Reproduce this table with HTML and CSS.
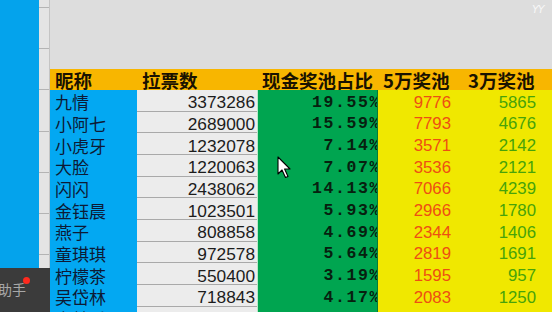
FILE: index.html
```html
<!DOCTYPE html>
<html lang="zh">
<head>
<meta charset="utf-8">
<link rel="stylesheet" href="styles.css">
</head>
<body>
<div class="screen">
  <div class="strip"></div>
  <div class="rowhdr"></div>
  <div class="main">
    <div class="topgap"></div>
    <div class="sheet">
      <div class="h">昵称</div>
      <div class="h">拉票数</div>
      <div class="h">现金奖池占比</div>
      <div class="h">5万奖池</div>
      <div class="h h3">3万奖池</div>

      <div class="c name">九情</div><div class="c votes">3373286</div><div class="c pct"><span>19.55%</span></div><div class="c w5">9776</div><div class="c w3">5865</div>
      <div class="c name">小阿七</div><div class="c votes">2689000</div><div class="c pct"><span>15.59%</span></div><div class="c w5">7793</div><div class="c w3">4676</div>
      <div class="c name">小虎牙</div><div class="c votes">1232078</div><div class="c pct"><span>7.14%</span></div><div class="c w5">3571</div><div class="c w3">2142</div>
      <div class="c name">大脸</div><div class="c votes">1220063</div><div class="c pct"><span>7.07%</span></div><div class="c w5">3536</div><div class="c w3">2121</div>
      <div class="c name">闪闪</div><div class="c votes">2438062</div><div class="c pct"><span>14.13%</span></div><div class="c w5">7066</div><div class="c w3">4239</div>
      <div class="c name">金钰晨</div><div class="c votes">1023501</div><div class="c pct"><span>5.93%</span></div><div class="c w5">2966</div><div class="c w3">1780</div>
      <div class="c name">燕子</div><div class="c votes">808858</div><div class="c pct"><span>4.69%</span></div><div class="c w5">2344</div><div class="c w3">1406</div>
      <div class="c name">童琪琪</div><div class="c votes">972578</div><div class="c pct"><span>5.64%</span></div><div class="c w5">2819</div><div class="c w3">1691</div>
      <div class="c name">柠檬茶</div><div class="c votes">550400</div><div class="c pct"><span>3.19%</span></div><div class="c w5">1595</div><div class="c w3">957</div>
      <div class="c name">吴岱林</div><div class="c votes">718843</div><div class="c pct"><span>4.17%</span></div><div class="c w5">2083</div><div class="c w3">1250</div>
      <div class="c name">李林乐</div><div class="c votes">705512</div><div class="c pct"><span>4.09%</span></div><div class="c w5">2045</div><div class="c w3">1227</div>
    </div>
  </div>

  <div class="helper"><span class="helper-text">助手</span><span class="dot"></span></div>
  <div class="yy">YY</div>
  <svg class="cursor" width="15" height="23" viewBox="0 0 15 23">
    <path d="M1 1 L1 18 L5 14 L8.5 21.5 L11 20.4 L7.6 13 L13 13 Z" fill="#fff" stroke="#000" stroke-width="1.1" stroke-linejoin="round"/>
  </svg>
</div>
</body>
</html>
```
FILE: styles.css
```css
* { box-sizing: border-box; }
html, body {
  margin: 0;
  padding: 0;
  width: 552px;
  height: 312px;
  overflow: hidden;
  background: #dcdcdc;
}
.screen {
  position: relative;
  display: flex;
  width: 552px;
  height: 312px;
  overflow: hidden;
  font-family: "Noto Sans CJK SC", "Noto Sans", sans-serif;
}
.strip {
  width: 39px;
  flex: none;
  background: #04a3ec;
}
.rowhdr {
  width: 11px;
  flex: none;
  background-color: #e4e4e4;
  border-right: 1px solid #c4c4c4;
  background-image: repeating-linear-gradient(to bottom, transparent 0, transparent 7px, #b4b4b4 7px, #b4b4b4 8px, transparent 8px, transparent 41.2px);
}
.main {
  flex: 1;
  display: flex;
  flex-direction: column;
  background: #dddddd;
}
.topgap {
  height: 69px;
  flex: none;
}
.sheet {
  display: grid;
  grid-template-columns: 87px 120px 121px 87px 87px;
  grid-template-rows: 21px;
  grid-auto-rows: 21.67px;
}
.h {
  background: #f8b600;
  font-weight: 700;
  font-size: 18.5px;
  line-height: 19px;
  color: #1a1200;
  padding: 2px 0 0 5px;
  display: flex;
  align-items: center;
  white-space: nowrap;
}
.h3 { padding-left: 3px; }
.c {
  display: flex;
  align-items: center;
  white-space: nowrap;
  line-height: 18px;
}
.name {
  background: #03a8f2;
  color: #0d1a35;
  font-size: 17px;
  padding: 3px 0 0 5px;
}
.votes {
  background: #ececec;
  border-bottom: 1px solid #a9a9a9;
  justify-content: flex-end;
  padding: 4px 2px 0 0;
  font-family: "Liberation Sans", sans-serif;
  font-size: 17.3px;
  color: #1c1c1c;
}
.pct {
  background: #00a550;
  border-left: 1px solid #b8e8c8;
  border-right: 1px solid #0a7a38;
  justify-content: flex-end;
  overflow: hidden;
  padding: 4px 0 0 0;
  font-family: "Liberation Mono", monospace;
  font-weight: 700;
  font-size: 16.5px;
  letter-spacing: 1.6px;
  color: #07200f;
}
.pct span { margin-right: -4px; }
.w5, .w3 {
  background: #f0e800;
  justify-content: flex-end;
  padding-top: 4px;
  font-family: "Liberation Sans", sans-serif;
  font-size: 16.8px;
}
.w5 {
  color: #ee4f12;
  padding-right: 14px;
}
.w3 {
  color: #47a30a;
  padding-right: 16px;
}
.helper {
  position: absolute;
  left: 0;
  top: 268px;
  width: 50px;
  height: 44px;
  background: #3b3b3b;
}
.helper-text {
  position: absolute;
  left: -2px;
  top: 13px;
  font-size: 14px;
  line-height: 16px;
  color: #a8a8a8;
}
.dot {
  position: absolute;
  left: 23px;
  top: 9px;
  width: 7px;
  height: 7px;
  border-radius: 50%;
  background: #ff2a1e;
}
.yy {
  position: absolute;
  left: 532px;
  top: 3px;
  font-family: "DejaVu Sans", sans-serif;
  font-size: 11px;
  font-style: italic;
  color: rgba(255, 255, 255, 0.75);
  letter-spacing: -1px;
}
.cursor {
  position: absolute;
  left: 277px;
  top: 156px;
}
```
